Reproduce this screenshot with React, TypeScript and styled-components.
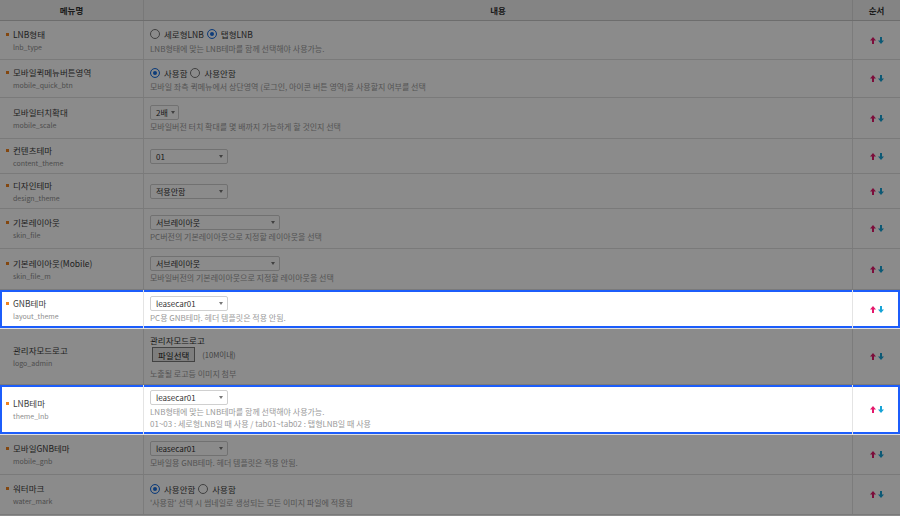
import React from 'react';
import styled, { createGlobalStyle, css } from 'styled-components';

type Option = { label: string; checked?: boolean };

type Setting = {
    name: string;
    code: string;
    bullet: boolean;
    height: number;
    focus?: boolean;
    kind: 'radio' | 'select' | 'file';
    options?: Option[];
    value?: string;
    width?: number;
    desc?: string[];
};

const settings: Setting[] = [
    {
        name: 'LNB형태', code: 'lnb_type', bullet: true, height: 39, kind: 'radio',
        options: [{ label: '세로형LNB' }, { label: '탭형LNB', checked: true }],
        desc: ['LNB형태에 맞는 LNB테마를 함께 선택해야 사용가능.']
    },
    {
        name: '모바일퀵메뉴버튼영역', code: 'mobile_quick_btn', bullet: true, height: 38, kind: 'radio',
        options: [{ label: '사용함', checked: true }, { label: '사용안함' }],
        desc: ['모바일 좌측 퀵메뉴에서 상단영역 (로그인, 아이콘 버튼 영역)을 사용할지 여부를 선택']
    },
    {
        name: '모바일터치확대', code: 'mobile_scale', bullet: false, height: 41, kind: 'select',
        value: '2배', width: 29,
        desc: ['모바일버전 터치 확대를 몇 배까지 가능하게 할 것인지 선택']
    },
    { name: '컨텐츠테마', code: 'content_theme', bullet: true, height: 35, kind: 'select', value: '01', width: 78 },
    { name: '디자인테마', code: 'design_theme', bullet: true, height: 35, kind: 'select', value: '적용안함', width: 78 },
    {
        name: '기본레이아웃', code: 'skin_file', bullet: true, height: 40, kind: 'select', value: '서브레이아웃', width: 130,
        desc: ['PC버전의 기본레이아웃으로 지정할 레이아웃을 선택']
    },
    {
        name: '기본레이아웃(Mobile)', code: 'skin_file_m', bullet: true, height: 41, kind: 'select', value: '서브레이아웃', width: 130,
        desc: ['모바일버전의 기본레이아웃으로 지정할 레이아웃을 선택']
    },
    {
        name: 'GNB테마', code: 'layout_theme', bullet: true, height: 39, focus: true, kind: 'select', value: 'leasecar01', width: 78,
        desc: ['PC용 GNB테마. 헤더 템플릿은 적용 안됨.']
    },
    {
        name: '관리자모드로고', code: 'logo_admin', bullet: false, height: 56, kind: 'file',
        desc: ['노출될 로고등 이미지 첨부']
    },
    {
        name: 'LNB테마', code: 'theme_lnb', bullet: true, height: 50, focus: true, kind: 'select', value: 'leasecar01', width: 78,
        desc: [
            'LNB형태에 맞는 LNB테마를 함께 선택해야 사용가능.',
            '01~03 : 세로형LNB일 때 사용 / tab01~tab02 : 탭형LNB일 때 사용'
        ]
    },
    {
        name: '모바일GNB테마', code: 'mobile_gnb', bullet: true, height: 40, kind: 'select', value: 'leasecar01', width: 78,
        desc: ['모바일용 GNB테마. 헤더 템플릿은 적용 안됨.']
    },
    {
        name: '워터마크', code: 'water_mark', bullet: true, height: 40, kind: 'radio',
        options: [{ label: '사용안함', checked: true }, { label: '사용함' }],
        desc: ["'사용함' 선택 시 썸네일로 생성되는 모든 이미지 파일에 적용됨"]
    }
];

const UpArrow = () => (
    <svg width="6" height="7" viewBox="0 0 6 7">
        <path d="M3 0 L6 3.4 H4 V7 H2 V3.4 H0 Z" fill="#e4186c" />
    </svg>
);

const DownArrow = () => (
    <svg width="6" height="7" viewBox="0 0 6 7">
        <path d="M3 7 L6 3.6 H4 V0 H2 V3.6 H0 Z" fill="#17a3d6" />
    </svg>
);

const Content: React.FC<{ item: Setting }> = ({ item }) => {
    if (item.kind === 'file') {
        return (
            <ContentCell>
                <SubTitle>관리자모드로고</SubTitle>
                <FileLine>
                    <FileButton>파일선택</FileButton>
                    <Limit>(10M이내)</Limit>
                </FileLine>
                <Desc $gap={6}>노출될 로고등 이미지 첨부</Desc>
            </ContentCell>
        );
    }
    return (
        <ContentCell>
            {item.kind === 'radio' ? (
                <RadioGroup>
                    {item.options!.map((o) => (
                        <RadioItem key={o.label}>
                            <RadioMark $checked={!!o.checked} />
                            {o.label}
                        </RadioItem>
                    ))}
                </RadioGroup>
            ) : (
                <Select $w={item.width || 78}>
                    <SelectText>{item.value}</SelectText>
                    <Caret />
                </Select>
            )}
            {item.desc && item.desc.map((d) => <Desc key={d}>{d}</Desc>)}
        </ContentCell>
    );
};

const App: React.FC = () => {
    return (
        <Page>
            <GlobalStyle />
            <HeadRow>
                <HeadCell>메뉴명</HeadCell>
                <HeadCell>내용</HeadCell>
                <HeadCell $last>순서</HeadCell>
            </HeadRow>
            {settings.map((item) => (
                <Row key={item.code} $h={item.height} $focus={item.focus}>
                    <NameCell>
                        <Label $bullet={item.bullet}>{item.name}</Label>
                        <Code>{item.code}</Code>
                    </NameCell>
                    <Content item={item} />
                    <OrderCell>
                        <UpArrow />
                        <DownArrow />
                    </OrderCell>
                </Row>
            ))}
            <Dim />
        </Page>
    );
};

const GlobalStyle = createGlobalStyle`
    html, body {
        margin: 0;
        padding: 0;
        background: #fff;
    }
    body {
        font-family: "Noto Sans CJK KR", "Noto Sans", sans-serif;
        overflow: hidden;
    }
`;

const Page = styled.div`
    position: relative;
    width: 900px;
    height: 516px;
    overflow: hidden;
    background: #fff;
`;

const Dim = styled.div`
    position: absolute;
    inset: 0;
    background: rgba(0, 0, 0, 0.455);
    z-index: 1;
`;

const HeadRow = styled.div`
    display: grid;
    grid-template-columns: 144px 1fr 47px;
    height: 21px;
    box-sizing: border-box;
    background: #f2f2f2;
    border-bottom: 1px solid #c9c9c9;
`;

const HeadCell = styled.div<{ $last?: boolean }>`
    display: flex;
    align-items: center;
    justify-content: center;
    font-size: 8.5px;
    font-weight: 700;
    color: #333;
    border-right: ${(p) => (p.$last ? 'none' : '1px solid #dcdcdc')};
`;

const Row = styled.div<{ $h: number; $focus?: boolean }>`
    display: grid;
    grid-template-columns: 144px 1fr 47px;
    height: ${(p) => p.$h}px;
    box-sizing: border-box;
    border-bottom: 1px solid #e0e0e0;
    background: #fff;

    ${(p) =>
        p.$focus &&
        css`
            position: relative;
            z-index: 2;
            box-shadow: inset 0 0 0 2px #1c5dfb;
        `}
`;

const NameCell = styled.div`
    display: flex;
    flex-direction: column;
    justify-content: center;
    gap: 2px;
    padding-left: 13px;
    border-right: 1px solid #e4e4e4;
`;

const Label = styled.div<{ $bullet: boolean }>`
    font-size: 8.5px;
    line-height: 11px;
    font-weight: 400;
    color: #3c3c3c;

    &::before {
        content: '';
        display: ${(p) => (p.$bullet ? 'inline-block' : 'none')};
        width: 3px;
        height: 3px;
        margin-left: -7px;
        margin-right: 4px;
        vertical-align: 2px;
        background: #f0831e;
    }
`;

const Code = styled.div`
    font-size: 7px;
    line-height: 10px;
    color: #8e8e8e;
`;

const ContentCell = styled.div`
    display: flex;
    flex-direction: column;
    justify-content: center;
    align-items: flex-start;
    padding-left: 6px;
    border-right: 1px solid #e4e4e4;
`;

const RadioGroup = styled.div`
    display: flex;
    align-items: center;
    gap: 3px;
    height: 15px;
`;

const RadioItem = styled.label`
    display: flex;
    align-items: center;
    gap: 4px;
    font-size: 8.5px;
    color: #3c3c3c;
`;

const RadioMark = styled.span<{ $checked: boolean }>`
    display: inline-block;
    width: 10px;
    height: 10px;
    box-sizing: border-box;
    border-radius: 50%;
    background: #fff;
    border: 1px solid ${(p) => (p.$checked ? '#1a6fe0' : '#777')};
    box-shadow: ${(p) => (p.$checked ? 'inset 0 0 0 2px #fff, inset 0 0 0 5px #1a6fe0' : 'none')};
`;

const Select = styled.div<{ $w: number }>`
    display: flex;
    align-items: center;
    justify-content: space-between;
    width: ${(p) => p.$w}px;
    height: 15px;
    box-sizing: border-box;
    padding: 0 4px 0 5px;
    border: 1px solid #d0d0d0;
    border-radius: 2px;
    background: #fff;
    font-size: 8px;
    color: #333;
    white-space: nowrap;
`;

const SelectText = styled.span`
    white-space: nowrap;
    flex-shrink: 0;
`;

const Caret = styled.span`
    flex-shrink: 0;
    width: 0;
    height: 0;
    margin-left: 3px;
    border-left: 2.5px solid transparent;
    border-right: 2.5px solid transparent;
    border-top: 3px solid #777;
`;

const Desc = styled.div<{ $gap?: number }>`
    margin-top: ${(p) => p.$gap || 1}px;
    font-size: 8px;
    line-height: 11px;
    color: #9a9a9a;
    white-space: nowrap;
`;

const SubTitle = styled.div`
    font-size: 8.5px;
    line-height: 12px;
    color: #333;
`;

const FileLine = styled.div`
    display: flex;
    align-items: center;
    gap: 7px;
    margin-top: 1px;
    padding-left: 2px;
`;

const FileButton = styled.span`
    display: inline-flex;
    align-items: center;
    height: 15px;
    box-sizing: border-box;
    padding: 0 5px;
    border: 1px solid #7a7a7a;
    background: #e8e8e8;
    font-size: 8.5px;
    color: #222;
`;

const Limit = styled.span`
    font-size: 7.5px;
    color: #777;
`;

const OrderCell = styled.div`
    display: flex;
    align-items: center;
    justify-content: center;
    gap: 2px;
    padding-left: 1px;
`;

export default App;
